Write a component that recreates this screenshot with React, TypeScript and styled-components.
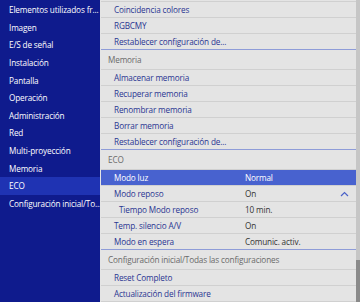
import React from "react";
import styled, { createGlobalStyle } from "styled-components";

const Global = createGlobalStyle`
  html, body { margin: 0; padding: 0; background: #e4e4e4; }
  body { font-family: "Open Sans", "Noto Sans", sans-serif; }
  * { box-sizing: border-box; }
`;

const Screen = styled.div`
  width: 360px;
  height: 302px;
  display: flex;
  overflow: hidden;
  background: #e4e4e4;
  font-size: 8.2px;
  letter-spacing: -0.15px;
`;

const Side = styled.div`
  width: 100px;
  flex: none;
  background: #0f1b8d;
  padding-top: 1px;
  display: flex;
  flex-direction: column;
`;

const SideItem = styled.div<{ $active?: boolean }>`
  height: 17.6px;
  flex: none;
  display: flex;
  align-items: center;
  padding-left: 9px;
  color: #ffffff;
  white-space: nowrap;
  overflow: hidden;
  background: ${(p) => (p.$active ? "#1f33b3" : "transparent")};
`;

const Main = styled.div`
  flex: 1;
  display: flex;
  min-width: 0;
`;

const List = styled.div`
  flex: 1;
  padding-top: 1px;
  padding-left: 1px;
  display: flex;
  flex-direction: column;
  min-width: 0;
`;

const Row = styled.div<{ $active?: boolean; $indent?: boolean }>`
  height: 16px;
  flex: none;
  border-top: 1px solid #d0d0d0;
  display: grid;
  grid-template-columns: 144px 1fr 16px;
  align-items: center;
  white-space: nowrap;
  background: ${(p) => (p.$active ? "#4862cf" : "transparent")};
  color: ${(p) => (p.$active ? "#ffffff" : "#2a3592")};
  & > span:first-child {
    padding-left: ${(p) => (p.$indent ? "18px" : "13px")};
    overflow: hidden;
  }
`;

const Value = styled.span<{ $active?: boolean }>`
  color: ${(p) => (p.$active ? "#ffffff" : "#333333")};
`;

const Header = styled.div`
  height: 20px;
  flex: none;
  border-top: 1px solid #8e9cd8;
  display: flex;
  align-items: center;
  padding-left: 7px;
  color: #6a6a6a;
  white-space: nowrap;
`;

const Chevron = styled.svg`
  width: 9px;
  height: 6px;
  justify-self: start;
`;

const Scroll = styled.div`
  width: 4px;
  flex: none;
  background: #c6c6c6;
  display: flex;
  flex-direction: column;
  justify-content: flex-end;
`;

const Thumb = styled.div`
  height: 42px;
  background: #8a8a8a;
`;

const sideItems = [
  "Elementos utilizados fr...",
  "Imagen",
  "E/S de señal",
  "Instalación",
  "Pantalla",
  "Operación",
  "Administración",
  "Red",
  "Multi-proyección",
  "Memoria",
  "ECO",
  "Configuración inicial/To...",
];

export default function App() {
  return (
    <>
      <Global />
      <Screen>
        <Side>
          {sideItems.map((s) => (
            <SideItem key={s} $active={s === "ECO"}>
              {s}
            </SideItem>
          ))}
        </Side>
        <Main>
          <List>
            <Row><span>Coincidencia colores</span></Row>
            <Row><span>RGBCMY</span></Row>
            <Row><span>Restablecer configuración de...</span></Row>
            <Header>Memoria</Header>
            <Row><span>Almacenar memoria</span></Row>
            <Row><span>Recuperar memoria</span></Row>
            <Row><span>Renombrar memoria</span></Row>
            <Row><span>Borrar memoria</span></Row>
            <Row><span>Restablecer configuración de...</span></Row>
            <Header>ECO</Header>
            <Row $active><span>Modo luz</span><Value $active>Normal</Value></Row>
            <Row>
              <span>Modo reposo</span>
              <Value>On</Value>
              <Chevron viewBox="0 0 9 6">
                <path d="M1 5 L4.5 1.5 L8 5" fill="none" stroke="#4a62c8" strokeWidth="1.2" />
              </Chevron>
            </Row>
            <Row $indent><span>Tiempo Modo reposo</span><Value>10 min.</Value></Row>
            <Row><span>Temp. silencio A/V</span><Value>On</Value></Row>
            <Row><span>Modo en espera</span><Value>Comunic. activ.</Value></Row>
            <Header>Configuración inicial/Todas las configuraciones</Header>
            <Row><span>Reset Completo</span></Row>
            <Row><span>Actualización del firmware</span></Row>
            <Row><span></span></Row>
          </List>
          <Scroll>
            <Thumb />
          </Scroll>
        </Main>
      </Screen>
    </>
  );
}
